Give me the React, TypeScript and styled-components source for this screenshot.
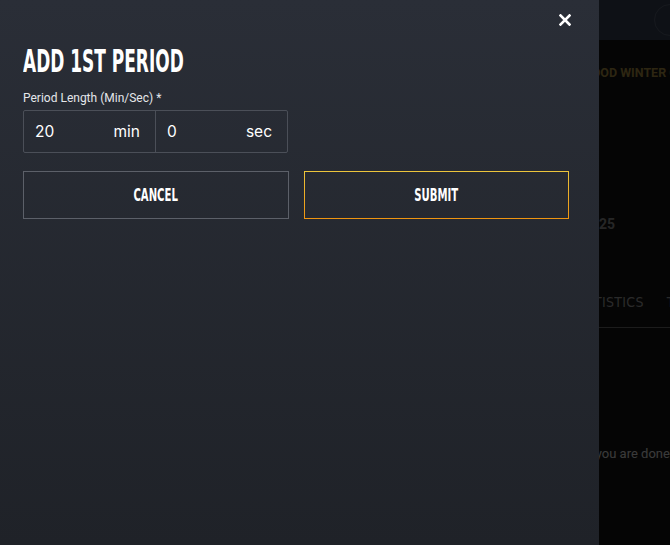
import React, { useState } from 'react';
import styled, { createGlobalStyle } from 'styled-components';

const GlobalStyle = createGlobalStyle`
  html, body {
    margin: 0;
    padding: 0;
    background: #141414;
  }
  body {
    font-family: Roboto, "Noto Sans", sans-serif;
    -webkit-font-smoothing: antialiased;
  }
  * {
    box-sizing: border-box;
  }
`;

const condensed = `"Liberation Sans Narrow", "DejaVu Sans Condensed", "Liberation Sans", sans-serif`;

// Page behind the drawer
const Page = styled.div`
  position: relative;
  width: 670px;
  height: 545px;
  overflow: hidden;
  background: #141414;
`;

const TopBar = styled.header`
  height: 40px;
  background: #3a4558;
  display: flex;
  align-items: center;
  justify-content: flex-end;
`;

const Avatar = styled.div`
  width: 32px;
  height: 32px;
  border-radius: 50%;
  border: 1px solid #5a6578;
  margin-right: -16px;
`;

const TeamRow = styled.div`
  height: 62px;
  display: flex;
  align-items: center;
  padding: 2px 0 0 556px;
`;

const TeamName = styled.div`
  font-family: Roboto, sans-serif;
  font-weight: 700;
  font-size: 12.5px;
  color: #b49848;
  white-space: nowrap;
`;

const ScoreRow = styled.div`
  height: 133px;
  display: flex;
  align-items: flex-end;
  padding: 0 0 3px 599px;
`;

const Score = styled.div`
  font-family: Roboto, sans-serif;
  font-weight: 700;
  font-size: 14px;
  line-height: 16px;
  color: #989898;
`;

const Tabs = styled.nav`
  height: 93px;
  display: flex;
  align-items: flex-end;
  gap: 23px;
  padding: 0 0 17px 571px;
  border-bottom: 1px solid #707070;
`;

const Tab = styled.span`
  font-family: ${condensed};
  font-size: 14px;
  line-height: 16px;
  letter-spacing: 0.3px;
  color: #a8a8a8;
`;

const Hint = styled.p`
  margin: 118px 0 0 485px;
  font-family: Roboto, sans-serif;
  font-size: 13px;
  color: #e8e8e8;
  white-space: nowrap;
`;

const Backdrop = styled.div`
  position: absolute;
  inset: 0;
  background: rgba(0, 0, 0, 0.75);
`;

// Drawer
const Drawer = styled.aside`
  position: absolute;
  top: 0;
  left: 0;
  bottom: 0;
  width: 599px;
  background: linear-gradient(180deg, #2a2e37 0%, #1f2228 100%);
  padding: 40px 30px 0 23px;
`;

const CloseButton = styled.button`
  position: absolute;
  top: 10px;
  right: 24px;
  width: 20px;
  height: 20px;
  padding: 0;
  border: none;
  background: none;
  cursor: pointer;
  display: flex;
  align-items: center;
  justify-content: center;
`;

const Title = styled.h2`
  margin: 0;
  height: 42px;
  font-family: ${condensed};
  font-weight: 700;
  font-size: 32px;
  line-height: 43px;
  color: #fff;
  white-space: nowrap;
  transform: scaleX(0.59);
  transform-origin: left center;
`;

const Label = styled.label`
  display: block;
  margin-top: 9px;
  font-size: 12px;
  line-height: 15px;
  color: #e4e6ea;
`;

const TimeGroup = styled.div`
  display: flex;
  width: 265px;
  height: 43px;
  margin-top: 4px;
  border: 1px solid #4b4f58;
  border-radius: 2px;
`;

const TimeCell = styled.div<{ $divider?: boolean }>`
  flex: 1;
  min-width: 0;
  display: flex;
  align-items: center;
  padding: 0 15px 0 11px;
  border-left: ${(p) => (p.$divider ? '1px solid #4b4f58' : 'none')};
`;

const TimeInput = styled.input`
  flex: 1;
  width: 0;
  min-width: 0;
  border: none;
  outline: none;
  background: transparent;
  font-family: Inter, sans-serif;
  font-size: 15.5px;
  color: #fff;
  padding: 0;
`;

const Unit = styled.span`
  font-family: Inter, sans-serif;
  font-size: 15.5px;
  color: #fff;
`;

const Actions = styled.div`
  display: flex;
  gap: 15px;
  width: 546px;
  margin-top: 18px;
`;

const ActionButton = styled.button<{ $primary?: boolean }>`
  flex: 1;
  height: 48px;
  background: transparent;
  border: 1px solid #5c6069;
  border-image: ${(p) =>
    p.$primary ? 'linear-gradient(180deg, #ecc53c, #ee9410) 1' : 'none'};
  font-family: ${condensed};
  font-weight: 700;
  font-size: 17px;
  color: #fff;
  cursor: pointer;
  display: flex;
  align-items: center;
  justify-content: center;
`;

const ButtonText = styled.span`
  display: inline-block;
  transform: scaleX(0.66);
`;

const App: React.FC = () => {
  const [minutes, setMinutes] = useState('20');
  const [seconds, setSeconds] = useState('0');

  return (
    <Page>
      <GlobalStyle />
      <TopBar>
        <Avatar />
      </TopBar>
      <TeamRow>
        <TeamName>ELMWOOD WINTER CLASSIC</TeamName>
      </TeamRow>
      <ScoreRow>
        <Score>25</Score>
      </ScoreRow>
      <Tabs>
        <Tab>STATISTICS</Tab>
        <Tab>TEAMS</Tab>
      </Tabs>
      <Hint>Press submit once you are done</Hint>
      <Backdrop />

      <Drawer>
        <CloseButton aria-label="Close">
          <svg width="12" height="12" viewBox="0 0 12 12">
            <path d="M1.5 1.5 L10.5 10.5 M10.5 1.5 L1.5 10.5" stroke="#fff" strokeWidth="2.6" strokeLinecap="square" />
          </svg>
        </CloseButton>
        <Title>ADD 1ST PERIOD</Title>
        <Label>Period Length (Min/Sec) *</Label>
        <TimeGroup>
          <TimeCell>
            <TimeInput value={minutes} onChange={(e) => setMinutes(e.target.value)} />
            <Unit>min</Unit>
          </TimeCell>
          <TimeCell $divider>
            <TimeInput value={seconds} onChange={(e) => setSeconds(e.target.value)} />
            <Unit>sec</Unit>
          </TimeCell>
        </TimeGroup>
        <Actions>
          <ActionButton>
            <ButtonText>CANCEL</ButtonText>
          </ActionButton>
          <ActionButton $primary>
            <ButtonText>SUBMIT</ButtonText>
          </ActionButton>
        </Actions>
      </Drawer>
    </Page>
  );
};

export default App;
